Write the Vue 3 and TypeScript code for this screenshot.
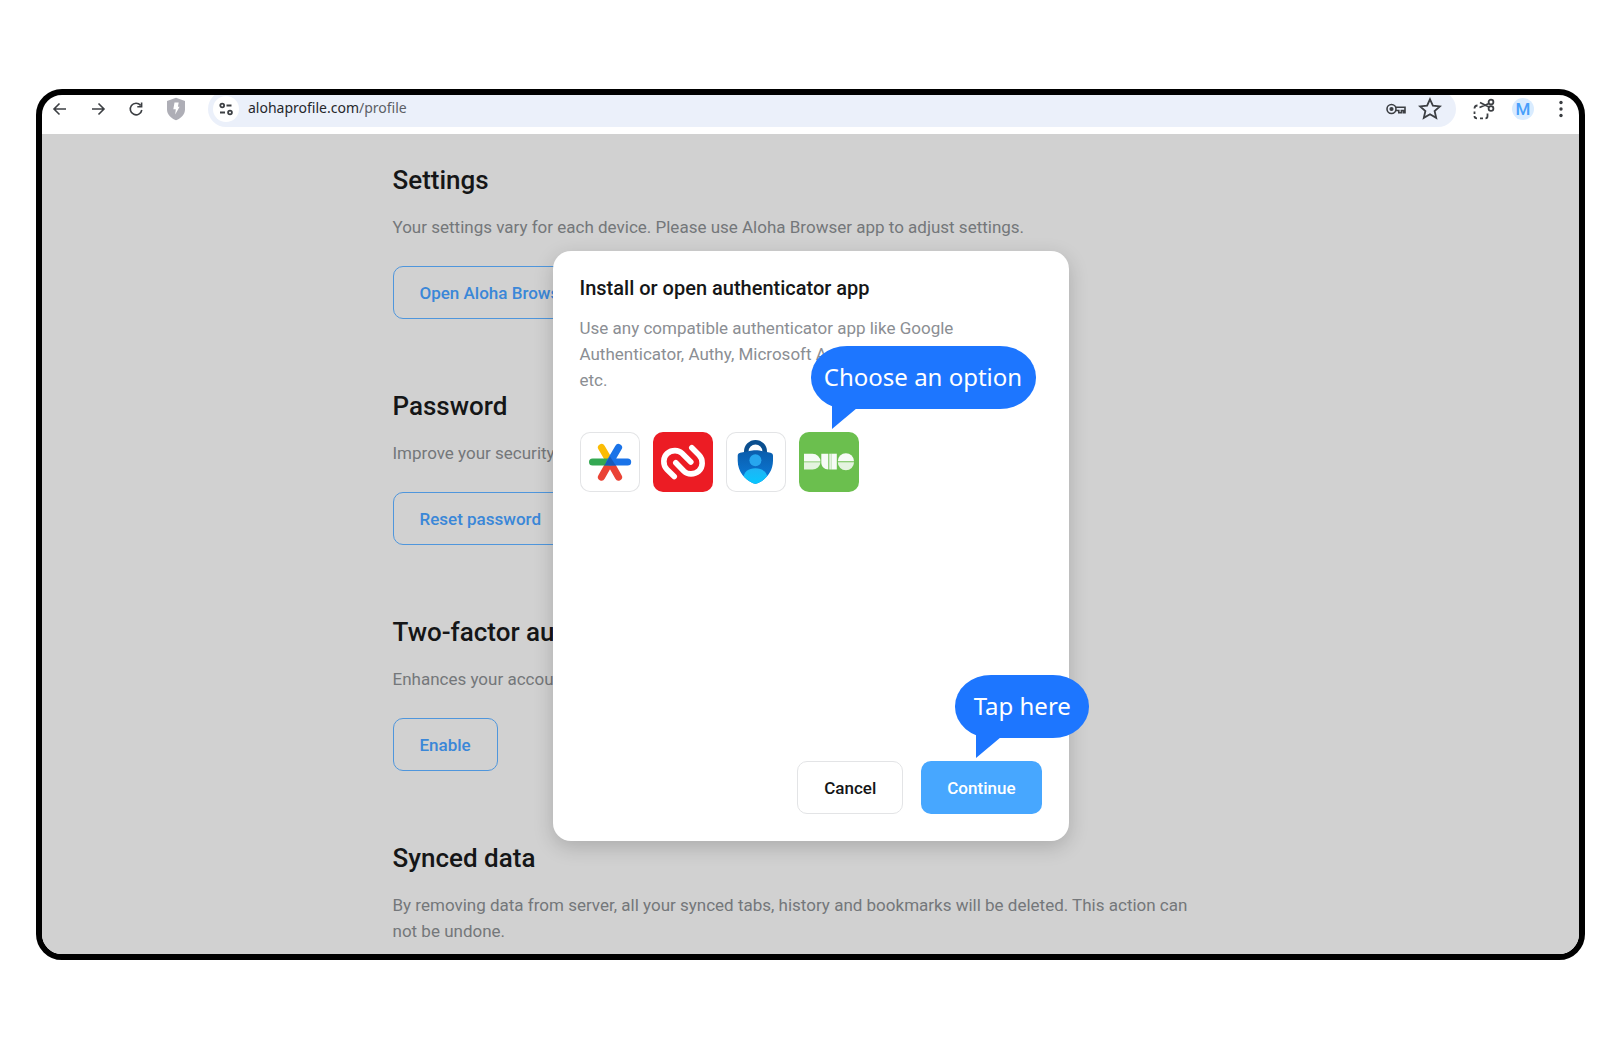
<script setup lang="ts">
interface Section {
  title: string
  text: string
  action?: string
}

const sections: Section[] = [
  {
    title: 'Settings',
    text: 'Your settings vary for each device. Please use Aloha Browser app to adjust settings.',
    action: 'Open Aloha Browser',
  },
  {
    title: 'Password',
    text: 'Improve your security by changing your password.',
    action: 'Reset password',
  },
  {
    title: 'Two-factor authentication',
    text: 'Enhances your account security.',
    action: 'Enable',
  },
  {
    title: 'Synced data',
    text: 'By removing data from server, all your synced tabs, history and bookmarks will be deleted. This action can not be undone.',
  },
]
</script>

<template>
  <div class="frame">
    <header class="toolbar">
      <nav class="nav">
        <button class="tool" aria-label="Back">
          <svg width="20" height="20" viewBox="0 0 20 20" class="line thin"><path d="M16 10H4M9.500 4.500 4 10l5.500 5.500" /></svg>
        </button>
        <button class="tool" aria-label="Forward">
          <svg width="20" height="20" viewBox="0 0 20 20" class="line thin"><path d="M4 10h12M10.500 4.500 16 10l-5.500 5.500" /></svg>
        </button>
        <button class="tool" aria-label="Reload">
          <svg width="20" height="20" viewBox="0 0 20 20" class="line thin"><path d="M14.600 6.400A5.800 5.800 0 1 0 15.800 11M15.600 3.500v4.300h-4.300" /></svg>
        </button>
        <button class="tool" aria-label="Shield">
          <svg width="24" height="24" viewBox="0 0 24 24">
            <path d="M12 .8 21 4v8.500c0 5-4 8.800-9 10.800-5-2-9-5.800-9-10.800V4z" fill="#aeaeb6" />
            <path d="M10.500 5.500h4.200l-.8 4.300h1.700l-4.400 7.700.6-5.300H9.300z" fill="#fff" />
          </svg>
        </button>
      </nav>
      <div class="address">
        <span class="site">
          <svg width="16" height="16" viewBox="0 0 16 16" class="line">
            <circle cx="4.200" cy="4.500" r="1.900" /><path d="M8.500 4.500h5M2 11.500h5" /><circle cx="12" cy="11.500" r="1.900" />
          </svg>
        </span>
        <a class="url" href="#">alohaprofile.com<span>/profile</span></a>
        <button class="tool" aria-label="Passwords">
          <svg width="20" height="20" viewBox="0 0 20 20" class="line thin">
            <circle cx="5.500" cy="10" r="4.500" /><circle cx="5.500" cy="10" r="1.300" fill="#3c3f43" />
            <path d="M9.800 8.300h9.200v5.400h-1.600v-2.200h-2v2.200h-2.600v-2.200H9.800" />
          </svg>
        </button>
        <button class="tool star" aria-label="Bookmark">
          <svg width="24" height="24" viewBox="0 0 24 24" class="line">
            <path d="m12 2.300 2.900 6.400 7 .7-5.300 4.600 1.600 6.900-6.200-3.600-6.200 3.600 1.600-6.900-5.300-4.600 7-.7z" />
          </svg>
        </button>
      </div>
      <div class="extras">
        <button class="tool" aria-label="Screenshot">
          <svg width="22" height="22" viewBox="0 0 22 22" class="line">
            <circle cx="18" cy="4" r="2.400" /><circle cx="18" cy="10.500" r="2.400" />
            <path d="M16 5.500 6.500 9.500M16 9 7 4.500M4.500 7.500C2.500 7.500 1.500 8.500 1.500 10.500M1.500 13.500v2.500M1.500 18c0 1.500 1 2.300 2.500 2.300M7 20.300h3M12.500 20.300c1.500 0 2-.8 2-2.300v-2.500" />
          </svg>
        </button>
        <button class="avatar" aria-label="Account">M</button>
        <button class="tool" aria-label="Menu">
          <svg width="20" height="20" viewBox="0 0 20 20" fill="#3c3f43"><circle cx="10" cy="3.500" r="1.700" /><circle cx="10" cy="10" r="1.700" /><circle cx="10" cy="16.500" r="1.700" /></svg>
        </button>
      </div>
    </header>

    <main class="page">
      <div class="column">
        <section v-for="s in sections" :key="s.title" class="section">
          <h2>{{ s.title }}</h2>
          <p>{{ s.text }}</p>
          <button v-if="s.action" class="btn outline" :class="{ wide: s.title === 'Password' }">{{ s.action }}</button>
        </section>
      </div>

      <div class="overlay">
        <div class="dialog" role="dialog" aria-labelledby="dialog-title">
          <h3 id="dialog-title">Install or open authenticator app</h3>
          <p>Use any compatible authenticator app like Google Authenticator, Authy, Microsoft Authenticator,<br />etc.</p>
          <div class="apps">
            <button class="app" aria-label="Google Authenticator">
              <svg width="60" height="60" viewBox="0 0 60 60" fill="none" stroke-width="7.200" stroke-linecap="round">
                <path d="M30 30 21.500 15.500" stroke="#fbbc04" />
                <path d="M30 30 21.500 45M30 30l8.500 15" stroke="#ea4335" />
                <path d="M30 30H12.600" stroke="#34a853" />
                <path d="M38.500 15.500 30 30h17.600" stroke="#1a73e8" stroke-linejoin="round" />
                <path d="m30 24.500-5.800 9.100h11.600z" fill="#185abc" />
              </svg>
            </button>
            <button class="app authy" aria-label="Authy">
              <svg width="60" height="60" viewBox="0 0 60 60" fill="none" stroke="#fff" stroke-width="5.600" stroke-linecap="round">
                <path d="M21.200 44.500 14 37.500C9.500 33 10 25 14.200 21.500 19 17.500 25.500 18 29 21.300L37.800 30" />
                <path d="M38.800 15.800 46 23c4.500 4.500 4 12.500-.2 16-4.800 4-11.300 3.500-14.800.2L22.800 30.800" />
              </svg>
            </button>
            <button class="app" aria-label="Microsoft Authenticator">
              <svg width="60" height="60" viewBox="0 0 60 60">
                <defs>
                  <linearGradient id="shield" x1="0" y1="0" x2="0" y2="1"><stop offset="0" stop-color="#0b5cab" /><stop offset="1" stop-color="#0a7fe0" /></linearGradient>
                  <linearGradient id="person" x1="0" y1="0" x2="0" y2="1"><stop offset="0" stop-color="#1fb4f5" /><stop offset="1" stop-color="#05c8ff" /></linearGradient>
                  <clipPath id="shape"><path d="M29.400 18.200c-4 0-7.500 1.300-15.200 2.500-1.600.3-2.500 1.500-2.500 3.100v5C11.700 40 19.500 48 26.500 51c2 .9 3.800.9 5.700 0 7-3 14.800-11 14.800-22.200v-5c0-1.600-.9-2.800-2.500-3.100-7.600-1.200-11.100-2.500-15.100-2.500z" /></clipPath>
                </defs>
                <path d="M20.300 23v-3.500a9.200 9.200 0 0 1 18.400 0V23" fill="none" stroke="#0b4f8f" stroke-width="4.600" />
                <g clip-path="url(#shape)">
                  <rect x="11" y="18" width="37" height="35" fill="url(#shield)" />
                  <circle cx="29.400" cy="28.300" r="6" fill="#27a6ee" />
                  <path d="M17.500 53v-7c0-6 5-9.700 11.900-9.700S41.300 40 41.300 46v7z" fill="url(#person)" />
                </g>
              </svg>
            </button>
            <div class="anchor">
              <button class="app duo" aria-label="Duo Mobile">
                <svg width="60" height="60" viewBox="0 0 60 60" fill="#fff">
                  <g opacity=".95">
                    <path d="M5 21.700h8.500a8 8 0 0 1 8 7.800H5z" />
                    <path d="M22.300 21.700h7v15.800c-4 0-7-3-7-7z" />
                    <path d="M32.500 21.700h5.300v15.800h-5.300z" />
                    <path d="M38.800 29.300a8.100 8.100 0 0 1 16.200 0z" />
                  </g>
                  <g opacity=".82">
                    <path d="M5 30.200h16.500a8 8 0 0 1-8 7.300H5z" />
                    <path d="M30.200 21.700h2.300v15.800h-2.300z" />
                    <path d="M38.800 30.200H55a8.100 8.100 0 0 1-16.200 0z" />
                  </g>
                </svg>
              </button>
              <div class="bubble choose">
                Choose an option
                <svg class="tail" width="25" height="28" viewBox="0 0 25 28"><path d="M0 0v28L25 7V0z" /></svg>
              </div>
            </div>
          </div>
          <div class="actions">
            <button class="btn cancel">Cancel</button>
            <div class="anchor">
              <button class="btn continue">Continue</button>
              <div class="bubble tap">
                Tap here
                <svg class="tail" width="25" height="28" viewBox="0 0 25 28"><path d="M0 0v28L25 7V0z" /></svg>
              </div>
            </div>
          </div>
        </div>
      </div>
    </main>
  </div>
</template>

<style>
body {
  margin: 0;
  background: #fff;
}
</style>

<style scoped>
.frame {
  margin: 89px 36px;
  border: 6px solid #000;
  border-radius: 26px;
  overflow: hidden;
  background: #fff;
  font-family: Roboto, "Liberation Sans", sans-serif;
}
button {
  font-family: inherit;
  padding: 0;
  border: 0;
  background: none;
  cursor: pointer;
}
svg {
  display: block;
}
.line {
  fill: none;
  stroke: #3c3f43;
  stroke-width: 1.8;
}
.thin {
  stroke-width: 1.6;
}
.toolbar {
  display: flex;
  align-items: center;
  height: 36px;
  margin-top: -4px;
  padding: 0 8px 7px;
}
.nav {
  display: flex;
  align-items: center;
  gap: 18px;
}
.address {
  flex: 1;
  display: flex;
  align-items: center;
  height: 36px;
  margin: 0 17px 0 20px;
  padding: 0 14px 0 5px;
  border-radius: 18px;
  background: #ebf0fa;
}
.site {
  display: grid;
  place-items: center;
  width: 26px;
  height: 26px;
  border-radius: 50%;
  background: #fff;
}
.url {
  flex: 1;
  margin-left: 9px;
  padding-bottom: 2px;
  font: 15px/20px "Noto Sans", "Open Sans", sans-serif;
  font-size: 14px;
  color: #25272b;
  text-decoration: none;
}
.url span {
  color: #5c5f66;
}
.star {
  margin-left: 12px;
}
.extras {
  display: flex;
  align-items: center;
  gap: 17px;
}
.avatar {
  width: 22px;
  height: 22px;
  border-radius: 50%;
  background: #d9ecff;
  color: #479ffb;
  font-size: 17px;
  font-weight: 500;
  line-height: 22px;
}
.page {
  position: relative;
  background: #d1d1d1;
  padding: 30px 24px 10px;
}
.column {
  max-width: 836px;
  margin: 0 auto;
}
.section + .section {
  margin-top: 70px;
}
h2 {
  margin: 0;
  font-size: 26px;
  line-height: 32px;
  font-weight: 500;
  color: #151617;
}
p {
  margin: 18px 0 0;
  max-width: 820px;
  font-size: 17px;
  line-height: 26px;
  color: #74777a;
}
.btn {
  height: 53px;
  padding: 0 26px;
  border: 1px solid transparent;
  border-radius: 10px;
  font-size: 17px;
  font-weight: 500;
}
.outline {
  display: block;
  margin-top: 26px;
  border-color: #4f96dc;
  color: #3a87d8;
}
.wide {
  padding-right: 60px;
}
.section:has(.outline) {
  padding-bottom: 1px;
}
.overlay {
  position: absolute;
  inset: 0;
  display: flex;
  justify-content: center;
  align-items: flex-start;
  padding-top: 117px;
}
.dialog {
  display: flex;
  flex-direction: column;
  box-sizing: border-box;
  width: 516px;
  min-height: 590px;
  padding: 23px 27px 27px;
  border-radius: 18px;
  background: #fff;
  box-shadow: 0 6px 20px rgba(0, 0, 0, 0.18);
}
.dialog h3 {
  margin: 0;
  font-size: 20px;
  line-height: 28px;
  font-weight: 500;
  color: #151617;
}
.dialog p {
  margin-top: 13px;
  color: #8b8e93;
  max-width: 384px;
}
.apps {
  display: flex;
  gap: 13px;
  margin-top: 39px;
}
.app {
  display: block;
  width: 60px;
  height: 60px;
  border-radius: 10px;
  box-shadow: inset 0 0 0 1px #e3e4e6;
}
.authy {
  background: #ec1c24;
  box-shadow: none;
}
.duo {
  background: #6bbf4e;
  box-shadow: none;
}
.actions {
  display: flex;
  justify-content: flex-end;
  gap: 18px;
  margin-top: auto;
}
.cancel {
  border-color: #e3e4e6;
  color: #151617;
}
.continue {
  padding: 0 25px;
  background: #47a7ff;
  color: #fff;
}
.anchor {
  position: relative;
}
.bubble {
  position: absolute;
  top: -86px;
  height: 63px;
  border-radius: 36px / 31px;
  background: #1d76ff;
  color: #fff;
  font: 400 24px/62px "Noto Sans", "Open Sans", sans-serif;
  text-align: center;
  white-space: nowrap;
}
.choose {
  left: 12px;
  width: 225px;
}
.tap {
  left: 34px;
  width: 134px;
}
.tail {
  position: absolute;
  left: 21px;
  top: 55px;
  fill: #1d76ff;
}
</style>
